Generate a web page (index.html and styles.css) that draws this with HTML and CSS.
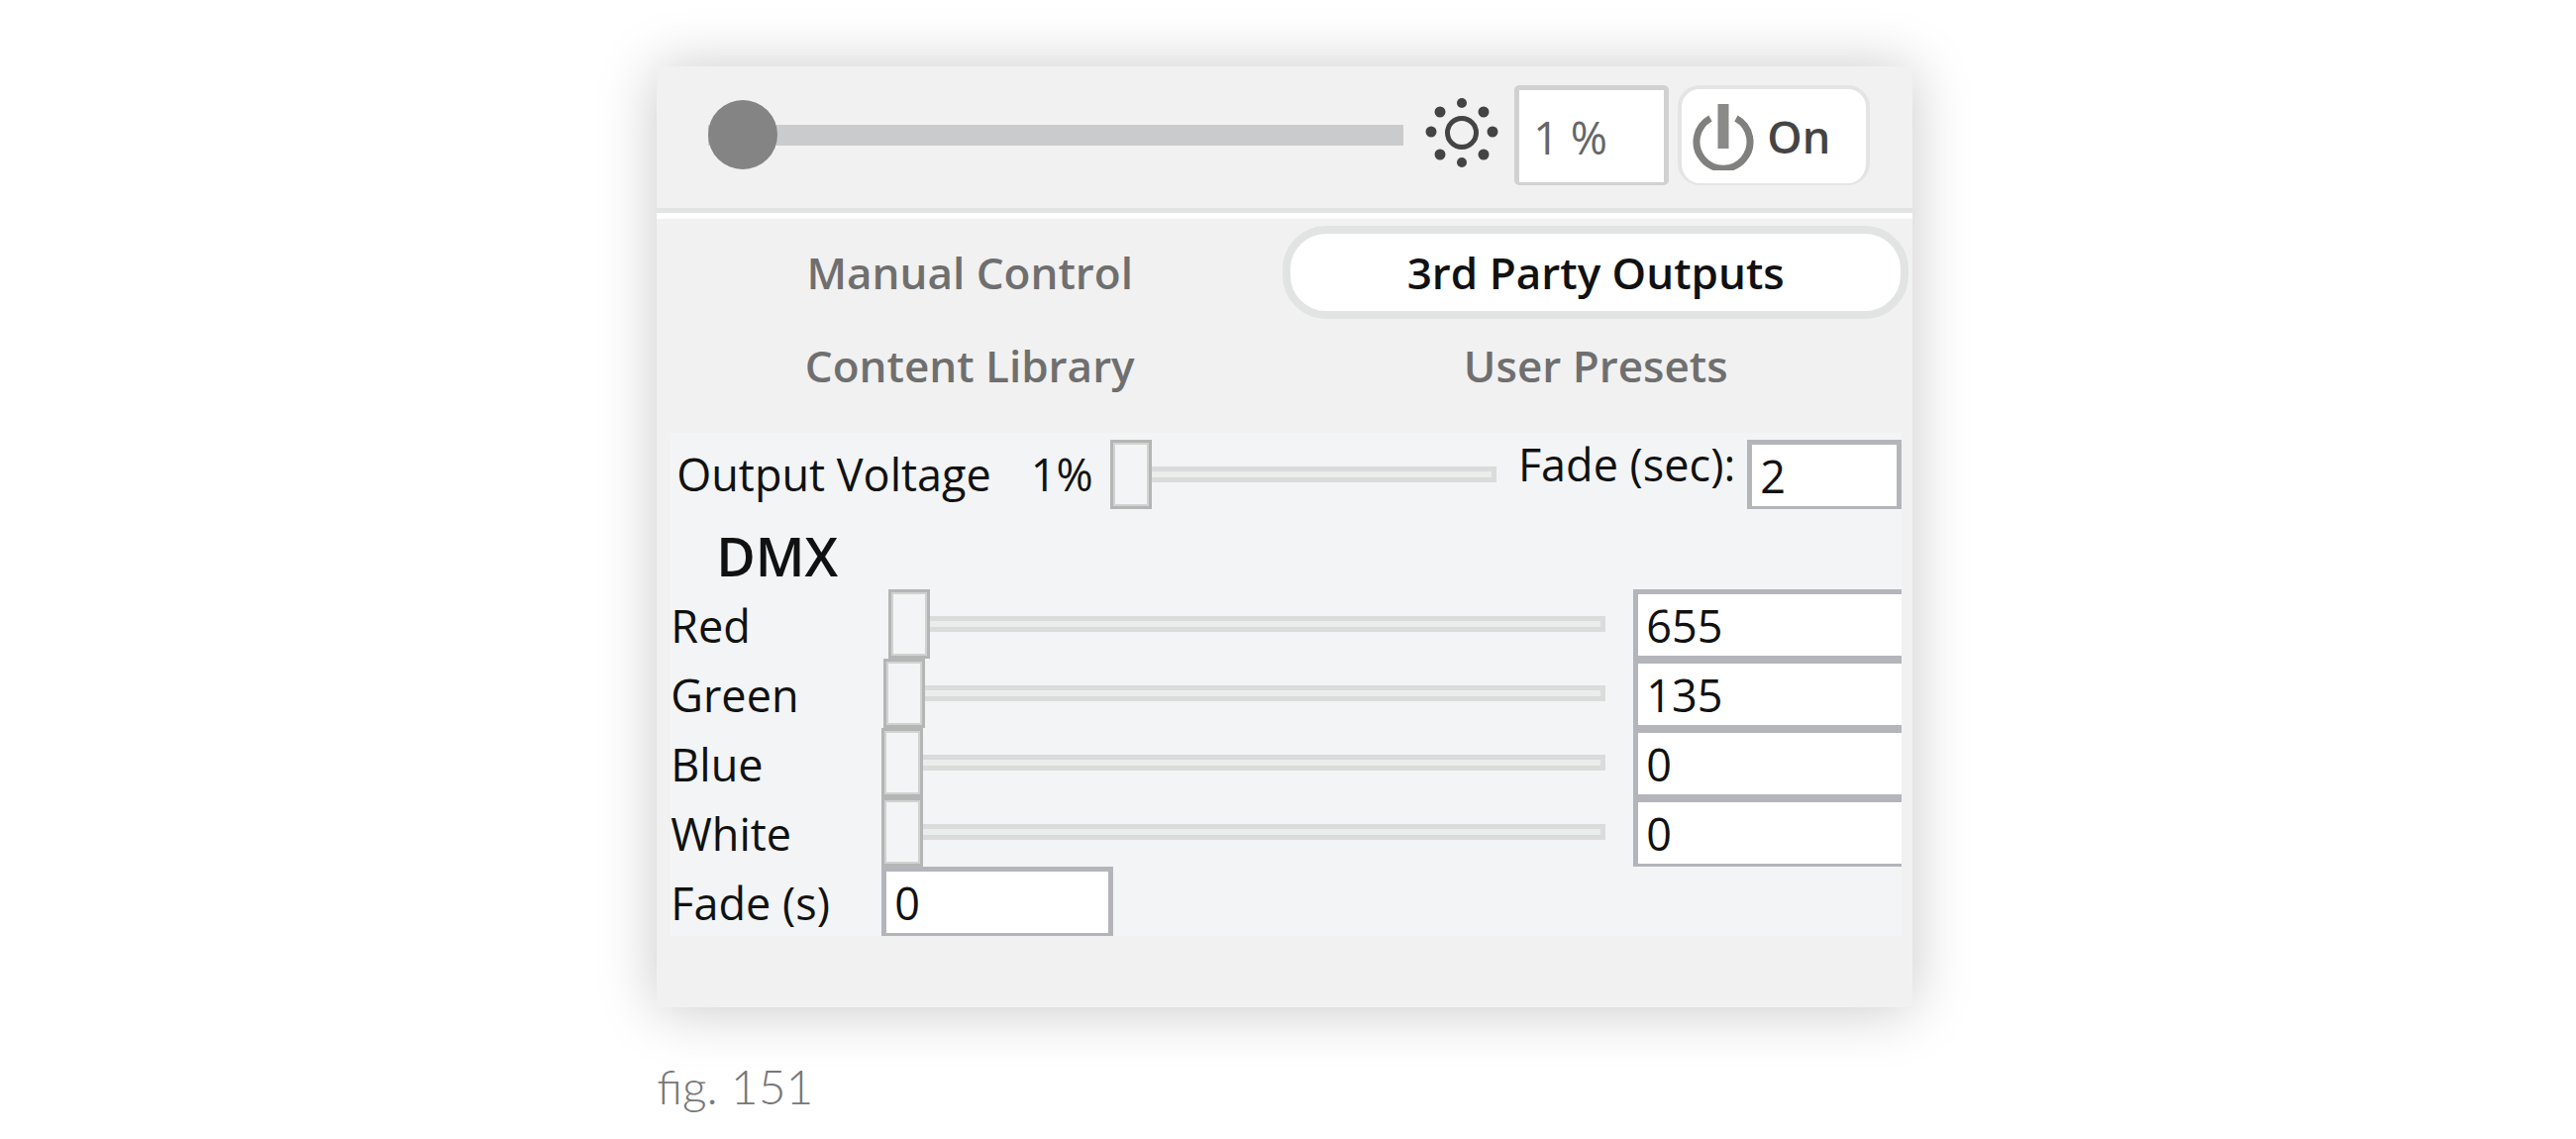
FILE: index.html
```html
<!DOCTYPE html>
<html lang="en">

<head>
    <meta charset="UTF-8">
    <meta name="viewport" content="width=device-width, initial-scale=1.0">
    <title>3rd Party Outputs</title>
    <link rel="stylesheet" href="styles.css">
</head>

<body>
    <figure class="figure">
        <div class="panel">
            <div class="topbar">
                <input class="brightness" type="range" min="1" max="100" value="1" aria-label="Brightness">
                <svg class="sun" viewBox="0 0 74 80" aria-hidden="true">
                    <circle cx="37" cy="37" r="14.5" fill="none" stroke="#444" stroke-width="5" />
                    <g fill="#444">
                        <circle cx="37" cy="7" r="5" />
                        <circle cx="37" cy="67" r="5" />
                        <circle cx="6" cy="36" r="5.5" />
                        <circle cx="68" cy="36" r="5.5" />
                        <circle cx="15" cy="16" r="5.5" />
                        <circle cx="59" cy="16" r="5.5" />
                        <circle cx="15" cy="59" r="5.5" />
                        <circle cx="59" cy="59" r="5.5" />
                    </g>
                </svg>
                <input class="percent" type="text" value="1 %" aria-label="Brightness percent">
                <button class="power" type="button">
                    <svg class="power-icon" viewBox="0 0 64 68" aria-hidden="true">
                        <path d="M19 15.5 A27 27 0 1 0 45 15.5" fill="none" stroke="#80807e" stroke-width="7" />
                        <path d="M32 1 V46" stroke="#8a8a88" stroke-width="11" />
                    </svg>
                    On
                </button>
            </div>
            <nav class="tabs">
                <button class="tab" type="button">Manual Control</button>
                <button class="tab active" type="button">3rd Party Outputs</button>
                <button class="tab" type="button">Content Library</button>
                <button class="tab" type="button">User Presets</button>
            </nav>
            <div class="outputs">
                <div class="voltage-row">
                    <label for="voltage">Output Voltage</label>
                    <output class="voltage-value" for="voltage">1%</output>
                    <input class="slider" id="voltage" type="range" min="1" max="100" value="1">
                    <label class="fade-label" for="fade-sec">Fade (sec):</label>
                    <input class="field fade-sec" id="fade-sec" type="text" value="2">
                </div>
                <h2 class="dmx-title">DMX</h2>
                <div class="dmx-row">
                    <label for="red">Red</label>
                    <input class="slider" id="red" type="range" min="0" max="65535" value="655">
                    <input class="field channel" type="text" value="655" aria-label="Red value">
                </div>
                <div class="dmx-row">
                    <label for="green">Green</label>
                    <input class="slider" id="green" type="range" min="0" max="65535" value="135">
                    <input class="field channel" type="text" value="135" aria-label="Green value">
                </div>
                <div class="dmx-row">
                    <label for="blue">Blue</label>
                    <input class="slider" id="blue" type="range" min="0" max="65535" value="0">
                    <input class="field channel" type="text" value="0" aria-label="Blue value">
                </div>
                <div class="dmx-row">
                    <label for="white">White</label>
                    <input class="slider" id="white" type="range" min="0" max="65535" value="0">
                    <input class="field channel" type="text" value="0" aria-label="White value">
                </div>
                <div class="dmx-row">
                    <label for="fade">Fade (s)</label>
                    <input class="field fade" id="fade" type="text" value="0">
                </div>
            </div>
        </div>
        <figcaption class="caption">fig. 151</figcaption>
    </figure>
</body>

</html>
```
FILE: styles.css
```css
* {
    box-sizing: border-box;
}

body {
    margin: 0;
    background-color: #fff;
    color: #111;
    font-family: "Open Sans", "Noto Sans", sans-serif;
    font-size: 45px;
}

input,
button {
    margin: 0;
    font: inherit;
    color: inherit;
}

.figure {
    width: 48.75%;
    margin: 67px 0 0 25.5%;
}

.panel {
    padding-bottom: 72px;
    background-color: #f1f1f1;
    box-shadow: 0 2px 56px rgba(0, 0, 0, 0.22);
}

/* brightness bar */
.topbar {
    display: flex;
    align-items: center;
    padding: 19px 43px 23px 52px;
    border-bottom: 5px solid #e1e4e3;
}

.brightness {
    flex: 1;
    min-width: 0;
    height: 70px;
    margin-right: 22px;
    background: none;
    appearance: none;
}

.brightness::-webkit-slider-runnable-track {
    height: 21px;
    background-color: #cacbcd;
}

.brightness::-webkit-slider-thumb {
    appearance: none;
    width: 70px;
    height: 70px;
    margin-top: -25px;
    border-radius: 50%;
    background-color: #848484;
}

.sun {
    width: 74px;
    height: 80px;
    margin-right: 16px;
}

.percent {
    width: 156px;
    height: 101px;
    margin-right: 9px;
    padding: 2px 0 0 14px;
    border: 5px solid #d0d1d0;
    border-bottom-width: 3px;
    border-radius: 5px;
    background-color: #fff;
    color: #666;
}

.power {
    display: flex;
    align-items: center;
    gap: 12px;
    width: 194px;
    height: 101px;
    padding: 0 0 0 10px;
    border: 4px solid #e3e5e4;
    border-bottom-width: 2px;
    border-radius: 22px;
    background-color: #fff;
    color: #444;
    font-weight: 600;
}

.power-icon {
    width: 64px;
    height: 68px;
}

/* tabs */
.tabs {
    display: grid;
    grid-template-columns: 1fr 1fr;
    grid-auto-rows: 94px;
    padding: 7px 4px 21px 0;
    border-top: 6px solid #fff;
}

.tab {
    padding: 0;
    border: 8px solid transparent;
    border-radius: 44px;
    background: none;
    color: #6f6f6f;
    font-size: 44px;
    font-weight: 600;
}

.tab.active {
    border-color: #e1e4e3;
    background-color: #fff;
    color: #111;
}

/* outputs */
.outputs {
    margin: 0 11px 0 14px;
    padding-top: 7px;
    background-color: #f2f4f6;
    line-height: 70px;
}

.voltage-row {
    display: flex;
    align-items: flex-start;
    padding-left: 6px;
}

.voltage-value {
    margin: 0 17px 0 40px;
}

.voltage-row .slider {
    flex: 1;
}

.fade-label {
    margin: 0 12px 0 22px;
    line-height: 50px;
}

.slider {
    min-width: 0;
    height: 70px;
    background: none;
    appearance: none;
}

.slider::-webkit-slider-runnable-track {
    height: 16px;
    background-color: #e9edec;
    box-shadow: inset 0 0 0 5px #dadbda;
}

/* the outer shadow hides the stub of track before the thumb */
.slider::-webkit-slider-thumb {
    appearance: none;
    width: 42px;
    height: 70px;
    margin-top: -27px;
    border: 3px solid #b4b6b5;
    background-color: #f2f4f6;
    box-shadow: inset 0 0 0 2px #d2d3d1, -8px 0 0 #f2f4f6;
}

.field {
    height: 70px;
    padding: 2px 0 0 8px;
    border: 5px solid #b3b5bb;
    border-bottom-width: 3px;
    border-radius: 0;
    background-color: #fff;
}

.fade-sec {
    width: 156px;
}

.dmx-title {
    margin: 0;
    padding: 14px 0 0 46px;
    font-size: 54px;
    font-weight: 600;
    line-height: 67px;
}

.dmx-row {
    display: grid;
    grid-template-columns: 213px 1fr 271px;
    height: 70px;
    line-height: 74px;
}

.dmx-row .slider {
    margin-right: 28px;
}

.channel {
    width: 100%;
    border-right: none;
}

.fade {
    width: 234px;
}

.caption {
    margin-top: 50px;
    color: #777;
    font-family: Lato, "Open Sans", sans-serif;
    font-size: 48px;
    font-weight: 300;
    line-height: 60px;
}
```
